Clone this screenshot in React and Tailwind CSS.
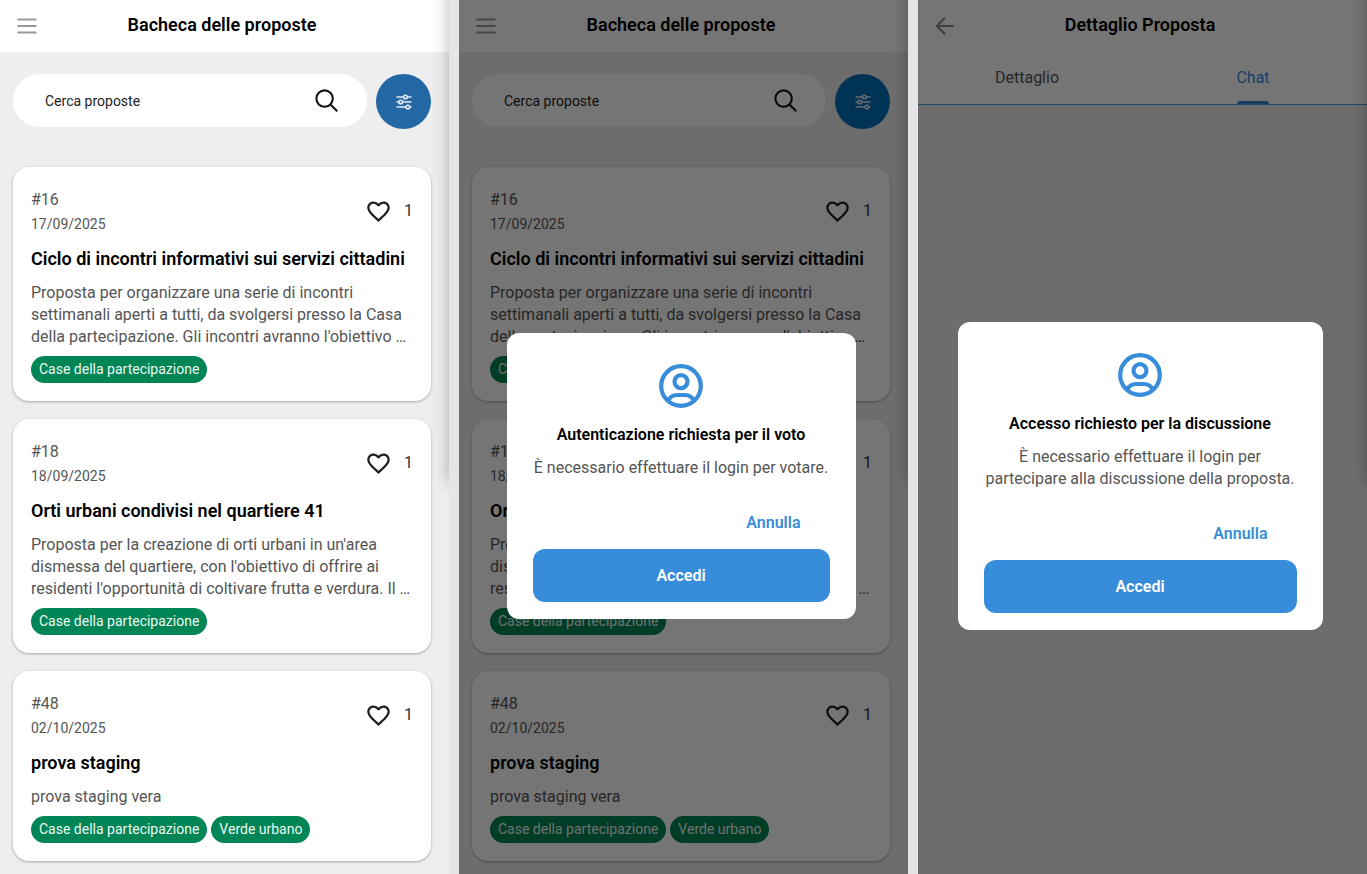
import { useState } from 'react';

const proposals = [
  {
    id: 16,
    date: '17/09/2025',
    title: 'Ciclo di incontri informativi sui servizi cittadini',
    lines: ['Proposta per organizzare una serie di incontri', 'settimanali aperti a tutti, da svolgersi presso la Casa', "della partecipazione. Gli incontri avranno l'obiettivo …"],
    tags: ['Case della partecipazione'],
    votes: 1,
  },
  {
    id: 18,
    date: '18/09/2025',
    title: 'Orti urbani condivisi nel quartiere 41',
    lines: ["Proposta per la creazione di orti urbani in un'area", "dismessa del quartiere, con l'obiettivo di offrire ai", "residenti l'opportunità di coltivare frutta e verdura. Il …"],
    tags: ['Case della partecipazione'],
    votes: 1,
  },
  {
    id: 48,
    date: '02/10/2025',
    title: 'prova staging',
    lines: ['prova staging vera'],
    tags: ['Case della partecipazione', 'Verde urbano'],
    votes: 1,
  },
];

function MenuIcon() {
  return (
    <svg viewBox="0 0 20 18" className="h-[18px] w-5" fill="none" stroke="#999999" strokeWidth="2.1" strokeLinecap="round">
      <path d="M1.200 2.500h17.400M1.200 9h17.400M1.200 15.500h17.400" />
    </svg>
  );
}

function BackIcon() {
  return (
    <svg viewBox="0 0 20 20" className="size-5" fill="none" stroke="#8c8c8c" strokeWidth="2" strokeLinecap="round" strokeLinejoin="round">
      <path d="M18 10H2M9.5 2.2L1.8 10l7.7 7.8" />
    </svg>
  );
}

function SearchIcon() {
  return (
    <svg viewBox="0 0 24 24" className="size-6" fill="none" stroke="#111" strokeWidth="2.1">
      <circle cx="9.600" cy="9.600" r="8.200" />
      <path d="M15.400 15.400l6.900 6.900" />
    </svg>
  );
}

function FilterIcon() {
  return (
    <svg viewBox="0 0 16 16" className="size-4" fill="none" stroke="#e3ebf3" strokeWidth="1.6">
      <path d="M.5 3h7M11.3 3h4.200M.5 8h2.400M6.500 8h9M.5 13h9.600M13.700 13h1.800" />
      <circle cx="9.4" cy="3" r="1.8" />
      <circle cx="4.7" cy="8" r="1.8" />
      <circle cx="11.9" cy="13" r="1.8" />
    </svg>
  );
}

function HeartIcon() {
  return (
    <svg viewBox="0 0 24 24" className="size-[27px]" fill="#1f1f1f">
      <path d="M16.5 3c-1.74 0-3.41.81-4.5 2.09C10.91 3.81 9.24 3 7.5 3 4.42 3 2 5.42 2 8.5c0 3.78 3.4 6.86 8.55 11.54L12 21.35l1.45-1.32C18.6 15.36 22 12.28 22 8.5 22 5.42 19.58 3 16.5 3zm-4.4 15.55l-.1.1-.1-.1C7.14 14.24 4 11.39 4 8.5 4 6.5 5.5 5 7.5 5c1.54 0 3.04.99 3.57 2.36h1.87C13.46 5.99 14.96 5 16.5 5c2 0 3.5 1.5 3.5 3.5 0 2.89-3.14 5.74-7.9 10.05z" />
    </svg>
  );
}

function AccountIcon() {
  return (
    <svg viewBox="0 0 44 44" className="size-11" fill="none" stroke="#388dda" strokeWidth="4.2">
      <circle cx="22" cy="22" r="19.8" />
      <circle cx="22" cy="17.6" r="6.5" />
      <path d="M8.6 37.2c2.2-4 5-6.2 9.4-6.2h8c4.4 0 7.2 2.2 9.4 6.2" />
    </svg>
  );
}

function PanelHeader({ title, icon, label }) {
  return (
    <header className="flex h-[52px] items-center bg-white pr-[5px]">
      <button type="button" aria-label={label} className="flex w-[53px] items-center justify-center">{icon}</button>
      <h1 className="flex-1 pb-0.5 text-center text-lg font-semibold text-black">{title}</h1>
      <span className="w-[53px]" />
    </header>
  );
}

function ProposalCard({ proposal }) {
  return (
    <article className="rounded-2xl bg-white px-[18px] pt-[22px] pb-[18px] shadow-[0_1px_3px_rgba(0,0,0,0.3)]">
      <div className="flex items-center justify-between">
        <div className="flex flex-col gap-0.5 text-[#555]">
          <span className="text-base leading-[22px]">#{proposal.id}</span>
          <time className="text-sm leading-[22px]">{proposal.date}</time>
        </div>
        <div className="flex items-center gap-3 pb-0.5">
          <button type="button" aria-label="Vota">
            <HeartIcon />
          </button>
          <span className="text-base text-[#333]">{proposal.votes}</span>
        </div>
      </div>
      <h2 className="mt-[13px] text-lg leading-[22px] font-semibold whitespace-nowrap text-black">{proposal.title}</h2>
      <p className="mt-3 text-base leading-[22px] whitespace-nowrap text-[#555]">
        {proposal.lines.map((line) => <span key={line} className="block">{line}</span>)}
      </p>
      <div className="mt-2 flex gap-1">
        {proposal.tags.map((tag) => <span key={tag} className="rounded-full bg-[#008556] px-2 text-sm leading-[27px] text-[#edf7f2]">{tag}</span>)}
      </div>
    </article>
  );
}

function BoardScreen({ filterColor }) {
  const [query, setQuery] = useState('');

  return (
    <>
      <PanelHeader title="Bacheca delle proposte" label="Menu" icon={<MenuIcon />} />
      <div className="pt-[22px] pr-[18px] pl-[13px]">
        <div className="flex gap-[9px]">
          <div className="flex h-[53px] flex-1 items-center rounded-full bg-white pr-7 pl-8">
            <input type="text" aria-label="Cerca proposte" value={query} onChange={(e) => setQuery(e.target.value)} placeholder="Cerca proposte" className="min-w-0 flex-1 text-sm text-black outline-none placeholder:text-[#222]" />
            <button type="button" aria-label="Cerca">
              <SearchIcon />
            </button>
          </div>
          <button type="button" aria-label="Filtri" className={`flex size-[55px] items-center justify-center rounded-full ${filterColor}`}>
            <FilterIcon />
          </button>
        </div>
        <div className="mt-[38px] flex flex-col gap-[18px]">
          {proposals.map((proposal) => <ProposalCard key={proposal.id} proposal={proposal} />)}
        </div>
      </div>
    </>
  );
}

function DetailScreen() {
  return (
    <>
      <PanelHeader title="Dettaglio Proposta" label="Indietro" icon={<BackIcon />} />
      <div role="tablist" className="grid h-[53px] grid-cols-2 gap-2 border-b border-[#3aa0e8] bg-white pr-[5px] text-base">
        <button type="button" role="tab" aria-selected="false" className="text-[#555]">Dettaglio</button>
        <button type="button" role="tab" aria-selected="true" className="flex h-full flex-col items-center justify-end text-[#388dda]">
          <span className="mb-[11px]">Chat</span>
          <span className="h-[3px] w-8 rounded-t bg-[#388dda]" />
        </button>
      </div>
    </>
  );
}

function LoginDialog({ title, width, children }) {
  return (
    <div className="absolute inset-0 flex items-center justify-center bg-black/54 pt-[78px] pr-[5px]">
      <div role="dialog" aria-label={title} className={`flex flex-col items-center rounded-xl bg-white px-[26px] pt-[31px] pb-[17px] ${width}`}>
        <AccountIcon />
        <h2 className="mt-4 text-base leading-[22px] font-semibold text-black">{title}</h2>
        <p className="mt-[11px] text-center text-base leading-[22px] text-[#555]">{children}</p>
        <button type="button" className="mt-[33px] mr-[29px] self-end text-base leading-[22px] font-semibold text-[#388dda]">Annulla</button>
        <button type="button" className="mt-[15px] h-[53px] w-full rounded-xl bg-[#388dda] text-base font-semibold text-white">Accedi</button>
      </div>
    </div>
  );
}

function Panel({ children, dialog }) {
  return (
    <section className="relative overflow-hidden bg-[#eee]">
      {children}
      <div className="absolute -top-4 left-full h-[498px] w-4 shadow-[0_0_16px_rgba(0,0,0,0.3)]" />
      {dialog}
    </section>
  );
}

export default function App() {
  return (
    <main className="grid min-h-screen grid-cols-3 gap-[10px] bg-[#e5e5e5] font-['Roboto',sans-serif]">
      <Panel>
        <BoardScreen filterColor="bg-[#2367a5]" />
      </Panel>
      <Panel dialog={<LoginDialog title="Autenticazione richiesta per il voto" width="w-[349px]">È necessario effettuare il login per votare.</LoginDialog>}>
        <BoardScreen filterColor="bg-[#006fb7]" />
      </Panel>
      <Panel dialog={<LoginDialog title="Accesso richiesto per la discussione" width="w-[365px]">È necessario effettuare il login per<br />partecipare alla discussione della proposta.</LoginDialog>}>
        <DetailScreen />
      </Panel>
    </main>
  );
}
